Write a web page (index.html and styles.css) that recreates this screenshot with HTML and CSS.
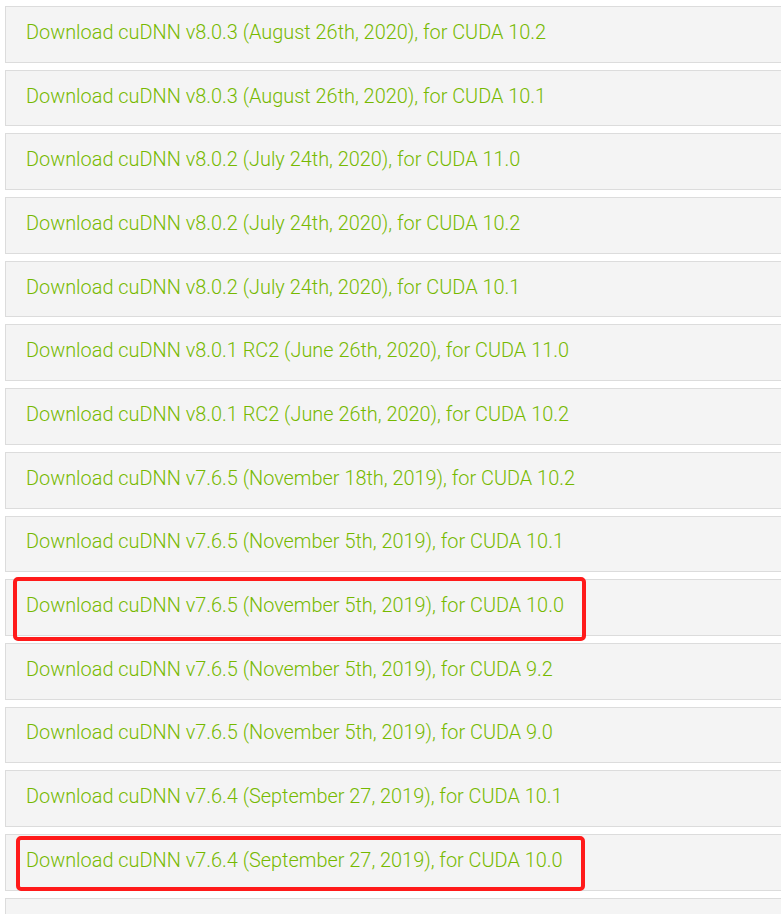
FILE: index.html
```html
<!DOCTYPE html>
<html lang="en">
<head>
<meta charset="utf-8">
<title>cuDNN Archive</title>
<link rel="stylesheet" href="styles.css">
</head>
<body>
<div class="list">
  <div class="row"><a class="dl" href="#">Download cuDNN v8.0.3 (August 26th, 2020), for CUDA 10.2</a></div>
  <div class="row"><a class="dl" href="#">Download cuDNN v8.0.3 (August 26th, 2020), for CUDA 10.1</a></div>
  <div class="row"><a class="dl" href="#">Download cuDNN v8.0.2 (July 24th, 2020), for CUDA 11.0</a></div>
  <div class="row"><a class="dl" href="#">Download cuDNN v8.0.2 (July 24th, 2020), for CUDA 10.2</a></div>
  <div class="row"><a class="dl" href="#">Download cuDNN v8.0.2 (July 24th, 2020), for CUDA 10.1</a></div>
  <div class="row"><a class="dl" href="#">Download cuDNN v8.0.1 RC2 (June 26th, 2020), for CUDA 11.0</a></div>
  <div class="row"><a class="dl" href="#">Download cuDNN v8.0.1 RC2 (June 26th, 2020), for CUDA 10.2</a></div>
  <div class="row"><a class="dl" href="#">Download cuDNN v7.6.5 (November 18th, 2019), for CUDA 10.2</a></div>
  <div class="row"><a class="dl" href="#">Download cuDNN v7.6.5 (November 5th, 2019), for CUDA 10.1</a></div>
  <div class="row"><a class="dl" href="#">Download cuDNN v7.6.5 (November 5th, 2019), for CUDA 10.0</a><span class="mark mark-a"></span></div>
  <div class="row"><a class="dl" href="#">Download cuDNN v7.6.5 (November 5th, 2019), for CUDA 9.2</a></div>
  <div class="row"><a class="dl" href="#">Download cuDNN v7.6.5 (November 5th, 2019), for CUDA 9.0</a></div>
  <div class="row"><a class="dl" href="#">Download cuDNN v7.6.4 (September 27, 2019), for CUDA 10.1</a></div>
  <div class="row"><a class="dl" href="#">Download cuDNN v7.6.4 (September 27, 2019), for CUDA 10.0</a><span class="mark mark-b"></span></div>
  <div class="row"></div>
</div>
</body>
</html>
```
FILE: styles.css
```css
html, body {
  margin: 0;
  padding: 0;
  background: #ffffff;
  overflow: hidden;
}
body {
  font-family: Roboto, "Liberation Sans", sans-serif;
}
.list {
  display: flex;
  flex-direction: column;
  gap: 7px;
  padding: 6px 0 0 5px;
  margin-right: -40px;
}
.row {
  position: relative;
  box-sizing: border-box;
  height: 56.7px;
  flex-shrink: 0;
  background: #f4f4f4;
  border: 1px solid #dcdcdc;
  display: flex;
  align-items: center;
  padding: 0 0 3px 20px;
}
.dl {
  color: #76b900;
  text-decoration: none;
  font-size: 19.9px;
  font-weight: 300;
  line-height: 22px;
  white-space: nowrap;
}
.mark {
  position: absolute;
  box-sizing: border-box;
  border: 4px solid #ff1a1a;
  border-radius: 5px;
  pointer-events: none;
}
.mark-a {
  top: -3px;
  left: 7.3px;
  width: 572.7px;
  height: 63.4px;
}
.mark-b {
  top: 1.2px;
  left: 10px;
  width: 569px;
  height: 55px;
}
```
